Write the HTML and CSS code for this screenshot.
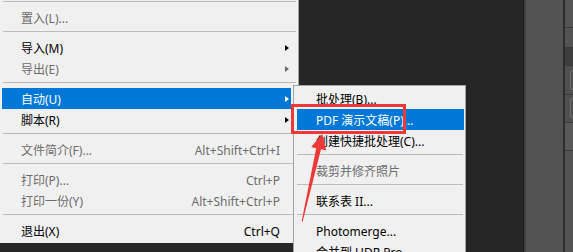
FILE: index.html
```html
<!DOCTYPE html>
<html lang="zh-CN">
<head>
<meta charset="utf-8">
<title>文件菜单 - 自动</title>
<link rel="stylesheet" href="styles.css">
</head>
<body>
<div class="screen">
  <div class="workspace">
    <div class="menu main-menu">
      <div class="sep"></div>
      <div class="item disabled"><span class="label">置入(L)...</span></div>
      <div class="sep"></div>
      <div class="item"><span class="label">导入(M)</span><span class="arr"></span></div>
      <div class="item disabled"><span class="label">导出(E)</span><span class="arr"></span></div>
      <div class="sep"></div>
      <div class="item active"><span class="label">自动(U)</span><span class="arr"></span></div>
      <div class="item"><span class="label">脚本(R)</span><span class="arr"></span></div>
      <div class="sep"></div>
      <div class="item disabled"><span class="label">文件简介(F)...</span><span class="key">Alt+Shift+Ctrl+I</span></div>
      <div class="sep"></div>
      <div class="item disabled"><span class="label">打印(P)...</span><span class="key">Ctrl+P</span></div>
      <div class="item disabled"><span class="label">打印一份(Y)</span><span class="key">Alt+Shift+Ctrl+P</span></div>
      <div class="sep"></div>
      <div class="item"><span class="label">退出(X)</span><span class="key">Ctrl+Q</span></div>
    </div>

    <div class="menu sub-menu">
      <div class="item"><span class="label">批处理(B)...</span></div>
      <div class="item active"><span class="label">PDF 演示文稿(P)...</span></div>
      <div class="item"><span class="label">创建快捷批处理(C)...</span></div>
      <div class="sep"></div>
      <div class="item disabled"><span class="label">裁剪并修齐照片</span></div>
      <div class="sep"></div>
      <div class="item"><span class="label">联系表 II...</span></div>
      <div class="sep"></div>
      <div class="item"><span class="label">Photomerge...</span></div>
      <div class="item"><span class="label">合并到 HDR Pro...</span></div>
    </div>

    <div class="mark-box"></div>
    <svg class="mark-arrow" width="573" height="252" viewBox="0 0 573 252">
      <polygon points="301.6,221.5 316.2,148.2 311.2,147 322.3,134 326.2,150.5 321,149.3 302.6,221.7" fill="#ee3838"/>
    </svg>
  </div>
  <div class="panel"></div>
  <div class="strip">
    <div class="strip-row r1"></div>
    <div class="strip-row r2"></div>
    <div class="strip-row r3"></div>
    <div class="strip-row r4"><span class="btn"></span></div>
    <div class="strip-row r5"><span class="btn"></span></div>
    <div class="strip-row r6"></div>
    <div class="strip-row r7"></div>
  </div>
</div>
</body>
</html>
```

FILE: styles.css
```css
* { box-sizing: border-box; }

html, body {
  margin: 0;
  padding: 0;
  background: #262626;
}

body {
  font-family: "Noto Sans", "Noto Sans CJK SC", sans-serif;
  font-size: 12px;
  color: #000;
}

.screen {
  display: flex;
  width: 573px;
  height: 252px;
  overflow: hidden;
}

.workspace {
  position: relative;
  flex: 0 0 523px;
  background: #262626;
}

.panel {
  flex: 0 0 42px;
  background: #535353;
  border-left: 1px solid #1d1d1d;
  border-right: 2px solid #2d2d2d;
  box-shadow: inset 2px 0 0 #404040;
}

.strip {
  flex: 1;
  display: flex;
  flex-direction: column;
  background: #535353;
}

.strip-row {
  border-bottom: 1px solid #393939;
}
.strip-row.r1 { height: 28px; background: #545454; }
.strip-row.r2 { height: 20px; background: #535353; }
.strip-row.r3 { height: 18px; background: #3e3e3e; }
.strip-row.r4 { height: 29px; background: #505050; padding: 4px 0 4px 5px; }
.strip-row.r5 { height: 28px; background: #505050; padding: 3px 0 4px 5px; }
.strip-row.r6 { height: 28px; background: #595959; }
.strip-row.r7 { flex: 1; border-bottom: 0; background: #535353; }

.btn {
  display: block;
  height: 100%;
  border: 1px solid #6c6c6c;
  border-right: 0;
  border-radius: 3px 0 0 3px;
}

/* menus */
.menu {
  position: absolute;
  background: #f0f0f0;
}

.main-menu {
  left: 0;
  top: -2px;
  width: 299px;
  padding-bottom: 2px;
  border-right: 1px solid #a0a0a0;
  z-index: 1;
}

.sub-menu {
  left: 293px;
  top: 85px;
  width: 173px;
  height: 190px;
  padding-top: 2px;
  border: 1px solid #a4a4a4;
  z-index: 2;
}

.item {
  display: flex;
  align-items: center;
  height: 21px;
  padding-top: 1px;
  white-space: nowrap;
}

.main-menu .item {
  margin: 0 7px 0 2px;
  padding-left: 19px;
}

.sub-menu .item {
  margin: 0 1px 0 3px;
  padding-left: 19px;
}

.item.disabled { color: #6d6d6d; }

.item.active {
  background: #0078d7;
  color: #fff;
}

.key {
  margin-left: auto;
  padding-right: 11px;
}

.arr {
  margin-left: auto;
  margin-right: 2px;
  width: 0;
  height: 0;
  border-left: 4px solid currentColor;
  border-top: 3.5px solid transparent;
  border-bottom: 3.5px solid transparent;
}

.sep {
  height: 1px;
  background: #bcbcbc;
  margin: 3px 2px 5px 3px;
}

/* annotations */
.mark-box {
  position: absolute;
  left: 291px;
  top: 104px;
  width: 115px;
  height: 30px;
  border: 3px solid #ee3838;
  z-index: 3;
}

.mark-arrow {
  position: absolute;
  left: 0;
  top: 0;
  z-index: 4;
}
```
